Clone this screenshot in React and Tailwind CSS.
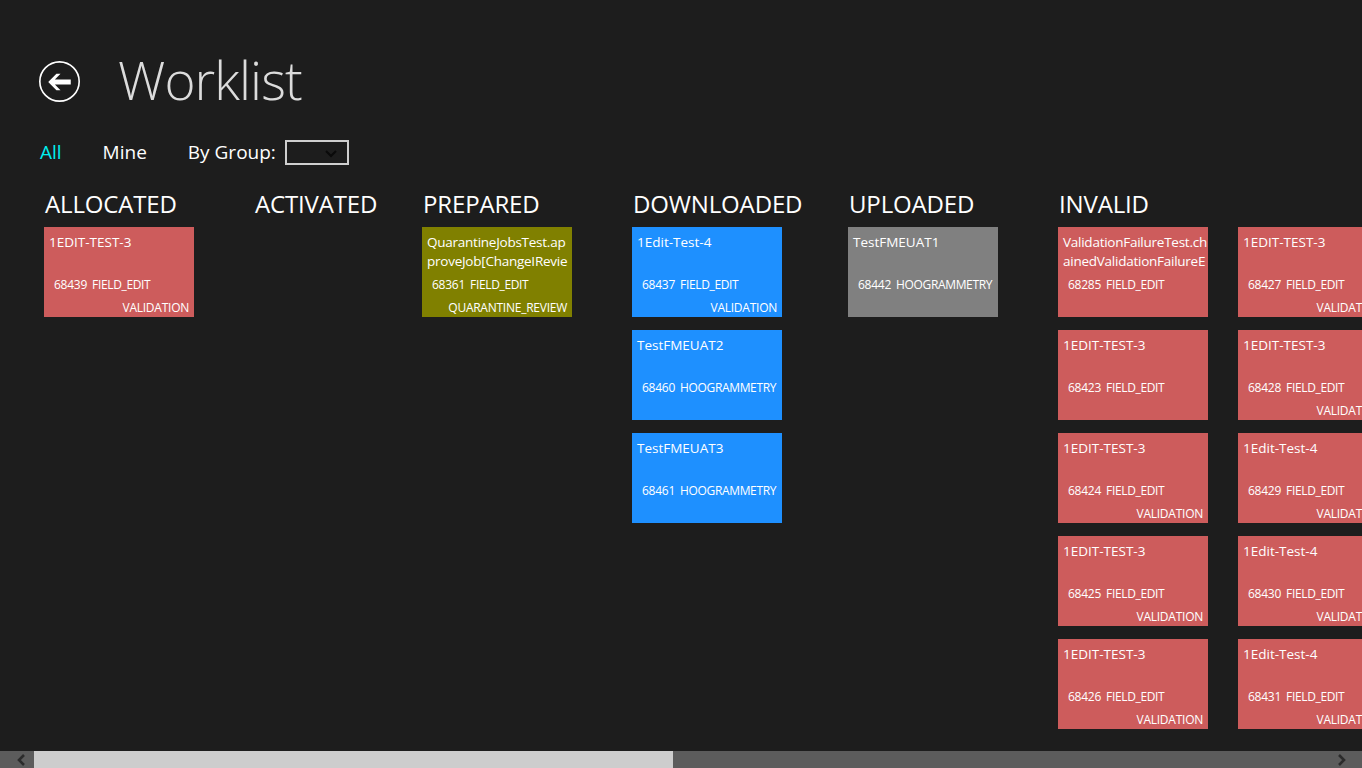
const RED = "bg-[#cd5c5c]";
const BLUE = "bg-[#1e90ff]";
const OLIVE = "bg-[#808000]";
const GRAY = "bg-[#808080]";

const COLUMNS = [
  {
    name: "ALLOCATED",
    width: "w-[210px]",
    cards: [{ title: "1EDIT-TEST-3", id: 68439, kind: "FIELD_EDIT", tag: "VALIDATION", bg: RED }],
  },
  { name: "ACTIVATED", width: "w-[168px]", cards: [] },
  {
    name: "PREPARED",
    width: "w-[210px]",
    cards: [
      {
        title: "QuarantineJobsTest.ap\nproveJob[ChangeIRevie",
        long: true,
        id: 68361,
        kind: "FIELD_EDIT",
        tag: "QUARANTINE_REVIEW",
        bg: OLIVE,
      },
    ],
  },
  {
    name: "DOWNLOADED",
    width: "w-[216px]",
    cards: [
      { title: "1Edit-Test-4", id: 68437, kind: "FIELD_EDIT", tag: "VALIDATION", bg: BLUE },
      { title: "TestFMEUAT2", id: 68460, kind: "HOOGRAMMETRY", bg: BLUE },
      { title: "TestFMEUAT3", id: 68461, kind: "HOOGRAMMETRY", bg: BLUE },
    ],
  },
  {
    name: "UPLOADED",
    width: "w-[210px]",
    cards: [{ title: "TestFMEUAT1", id: 68442, kind: "HOOGRAMMETRY", bg: GRAY }],
  },
  {
    name: "INVALID",
    width: "w-[360px]",
    cards: [
      { title: "ValidationFailureTest.ch\nainedValidationFailureE", long: true, id: 68285, kind: "FIELD_EDIT", bg: RED },
      { title: "1EDIT-TEST-3", id: 68423, kind: "FIELD_EDIT", bg: RED },
      { title: "1EDIT-TEST-3", id: 68424, kind: "FIELD_EDIT", tag: "VALIDATION", bg: RED },
      { title: "1EDIT-TEST-3", id: 68425, kind: "FIELD_EDIT", tag: "VALIDATION", bg: RED },
      { title: "1EDIT-TEST-3", id: 68426, kind: "FIELD_EDIT", tag: "VALIDATION", bg: RED },
      { title: "1EDIT-TEST-3", id: 68427, kind: "FIELD_EDIT", tag: "VALIDATION", bg: RED },
      { title: "1EDIT-TEST-3", id: 68428, kind: "FIELD_EDIT", tag: "VALIDATION", bg: RED },
      { title: "1Edit-Test-4", id: 68429, kind: "FIELD_EDIT", tag: "VALIDATION", bg: RED },
      { title: "1Edit-Test-4", id: 68430, kind: "FIELD_EDIT", tag: "VALIDATION", bg: RED },
      { title: "1Edit-Test-4", id: 68431, kind: "FIELD_EDIT", tag: "VALIDATION", bg: RED },
    ],
  },
];

function Card({ card }) {
  return (
    <div className={`w-[150px] h-[90px] overflow-hidden text-white ${card.bg}`}>
      <div
        className={[
          "h-[38px] mt-[6px] pl-[5px] text-[13.5px] leading-[19px] whitespace-pre overflow-hidden",
          card.long ? "tracking-[-0.25px]" : "",
        ].join(" ")}
      >
        {card.title}
      </div>
      <div className="h-[23px] mt-[6px] pl-[10px] text-[12px] leading-[16px] whitespace-nowrap tracking-[-0.25px]">
        {card.id}
        <span className="ml-[5px] tracking-[-0.35px]">{card.kind}</span>
      </div>
      <div className="pr-[5px] text-right text-[12px] leading-[16px] whitespace-nowrap tracking-[-0.25px]">
        {card.tag}
      </div>
    </div>
  );
}

function Column({ column }) {
  return (
    <section className={`shrink-0 ${column.width}`}>
      <h2 className="pl-px h-[39px] text-[24px] leading-[32px] text-white tracking-[-0.15px]">{column.name}</h2>
      <div className="grid grid-flow-col grid-rows-5 auto-cols-[150px] gap-x-[30px] gap-y-[13px] justify-start">
        {column.cards.map((card) => (
          <Card key={card.id} card={card} />
        ))}
      </div>
    </section>
  );
}

export default function App() {
  return (
    <div className="h-screen w-full flex flex-col overflow-hidden bg-[#1d1d1d] font-['Open_Sans',sans-serif]">
      <header className="flex items-center h-[56px] mt-[53px] pl-[39px]">
        <svg viewBox="0 0 40 40" className="w-[41px] h-[41px] shrink-0" fill="none">
          <circle cx="20" cy="20" r="19.2" stroke="white" strokeWidth="1.6" />
          <path d="M9 20.5 L17 12.5 H21 L15.5 18 H31 V23 H15.5 L21 28.5 H17 Z" fill="white" />
        </svg>
        <h1 className="ml-[38px] text-[53px] leading-[56px] font-light text-[#dcdcdc] tracking-[-0.9px] -translate-y-px">Worklist</h1>
      </header>

      <nav className="flex items-center h-[26px] mt-[30px] pl-[40px] text-[19px] text-white">
        <span className="text-[#00efef]">All</span>
        <span className="ml-[41px]">Mine</span>
        <span className="ml-[41px]">By Group:</span>
        <div className="ml-[9px] w-[64px] h-[25px] border-2 border-[#cfcfcf] flex items-center justify-end pr-[10px]">
          <svg viewBox="0 0 12 8" className="w-[12px] h-[8px] mt-[3px]" fill="none">
            <path d="M1 1 L6 6 L11 1" stroke="#0a0a0a" strokeWidth="2" />
          </svg>
        </div>
      </nav>

      <main className="flex-1 min-h-0 flex mt-[23px] pl-[44px] overflow-hidden">
        {COLUMNS.map((column) => (
          <Column key={column.name} column={column} />
        ))}
      </main>

      <div className="h-[17px] shrink-0 flex items-center bg-[#5c5c5c]">
        <div className="w-[34px] flex justify-center pl-[7px]">
          <svg viewBox="0 0 10 12" className="w-[10px] h-[12px]" fill="none">
            <path d="M8 1 L3 6 L8 11" stroke="#2b2b2b" strokeWidth="2.6" />
          </svg>
        </div>
        <div className="w-[639px] h-full bg-[#cdcdcd]" />
        <div className="flex-1 flex justify-end pr-[15px]">
          <svg viewBox="0 0 10 12" className="w-[10px] h-[12px]" fill="none">
            <path d="M2 1 L7 6 L2 11" stroke="#2b2b2b" strokeWidth="2.6" />
          </svg>
        </div>
      </div>
    </div>
  );
}
